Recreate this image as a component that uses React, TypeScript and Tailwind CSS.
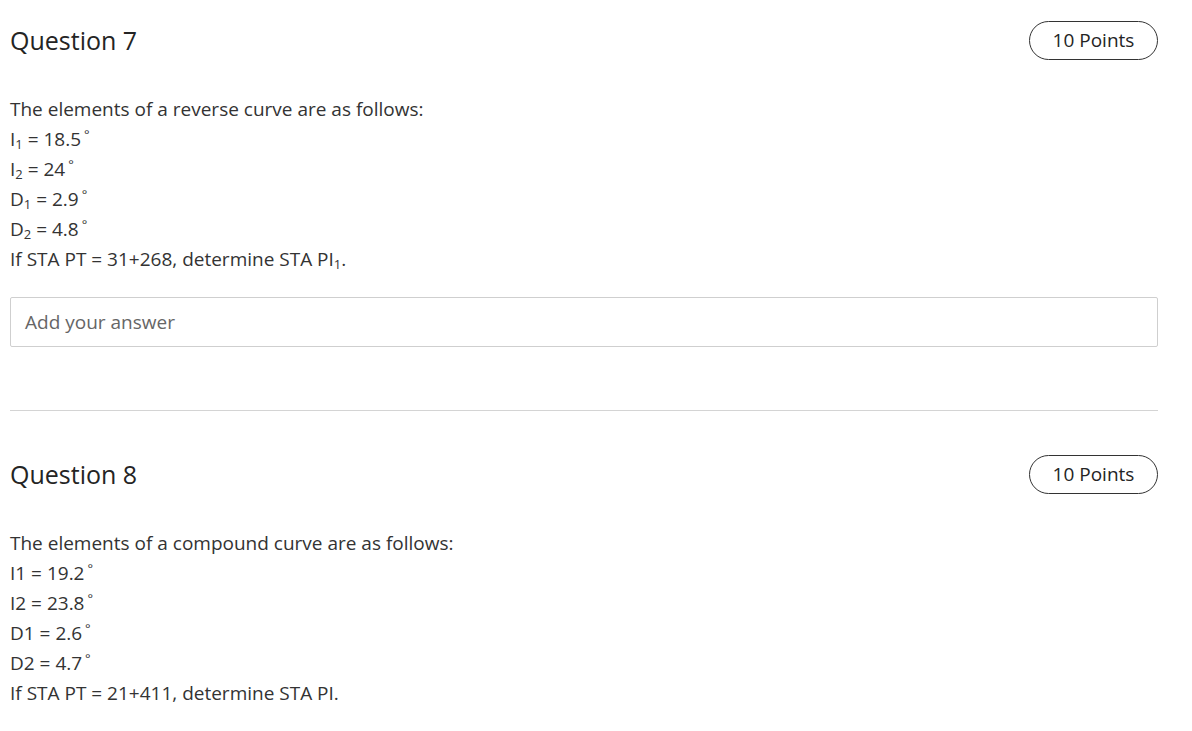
import React from "react";

const font = { fontFamily: '"Open Sans", "Noto Sans", sans-serif' };

function Deg() {
  return <sup className="text-[13px] relative -top-[7px] ml-[3px]">°</sup>;
}

function Sub({ children }: { children: React.ReactNode }) {
  return <sub className="text-[13px]">{children}</sub>;
}

function Header({ n }: { n: number }) {
  return (
    <div className="flex items-center justify-between h-[40px]">
      <div className="text-[25px] text-[#242424] leading-none">Question {n}</div>
      <div className="h-[39px] w-[129px] rounded-full border border-[#333] flex items-center justify-center text-[19px] text-[#242424]">
        10 Points
      </div>
    </div>
  );
}

export default function App() {
  return (
    <div className="bg-white min-h-[731px] w-[1192px] text-[#333]" style={font}>
      <div className="pl-[10px] w-[1158px] pt-[20px]">
        <Header n={7} />
        <div className="mt-[34px] text-[19px] leading-[30px] text-[#333]">
          <div>The elements of a reverse curve are as follows:</div>
          <div>I<Sub>1</Sub> = 18.5<Deg /></div>
          <div>I<Sub>2</Sub> = 24<Deg /></div>
          <div>D<Sub>1</Sub> = 2.9<Deg /></div>
          <div>D<Sub>2</Sub> = 4.8<Deg /></div>
          <div>If STA PT = 31+268, determine STA PI<Sub>1</Sub>.</div>
        </div>
        <div className="mt-[23px] h-[50px] border border-[#cfcfcf] rounded-[2px] flex items-center pl-[14px] text-[19px] text-[#666]">
          Add your answer
        </div>
        <div className="mt-[63px] h-px bg-[#d4d4d4]" />
        <div className="mt-[43px]">
          <Header n={8} />
        </div>
        <div className="mt-[34px] text-[19px] leading-[30px] text-[#333]">
          <div>The elements of a compound curve are as follows:</div>
          <div>I1 = 19.2<Deg /></div>
          <div>I2 = 23.8<Deg /></div>
          <div>D1 = 2.6<Deg /></div>
          <div>D2 = 4.7<Deg /></div>
          <div>If STA PT = 21+411, determine STA PI.</div>
        </div>
      </div>
    </div>
  );
}
